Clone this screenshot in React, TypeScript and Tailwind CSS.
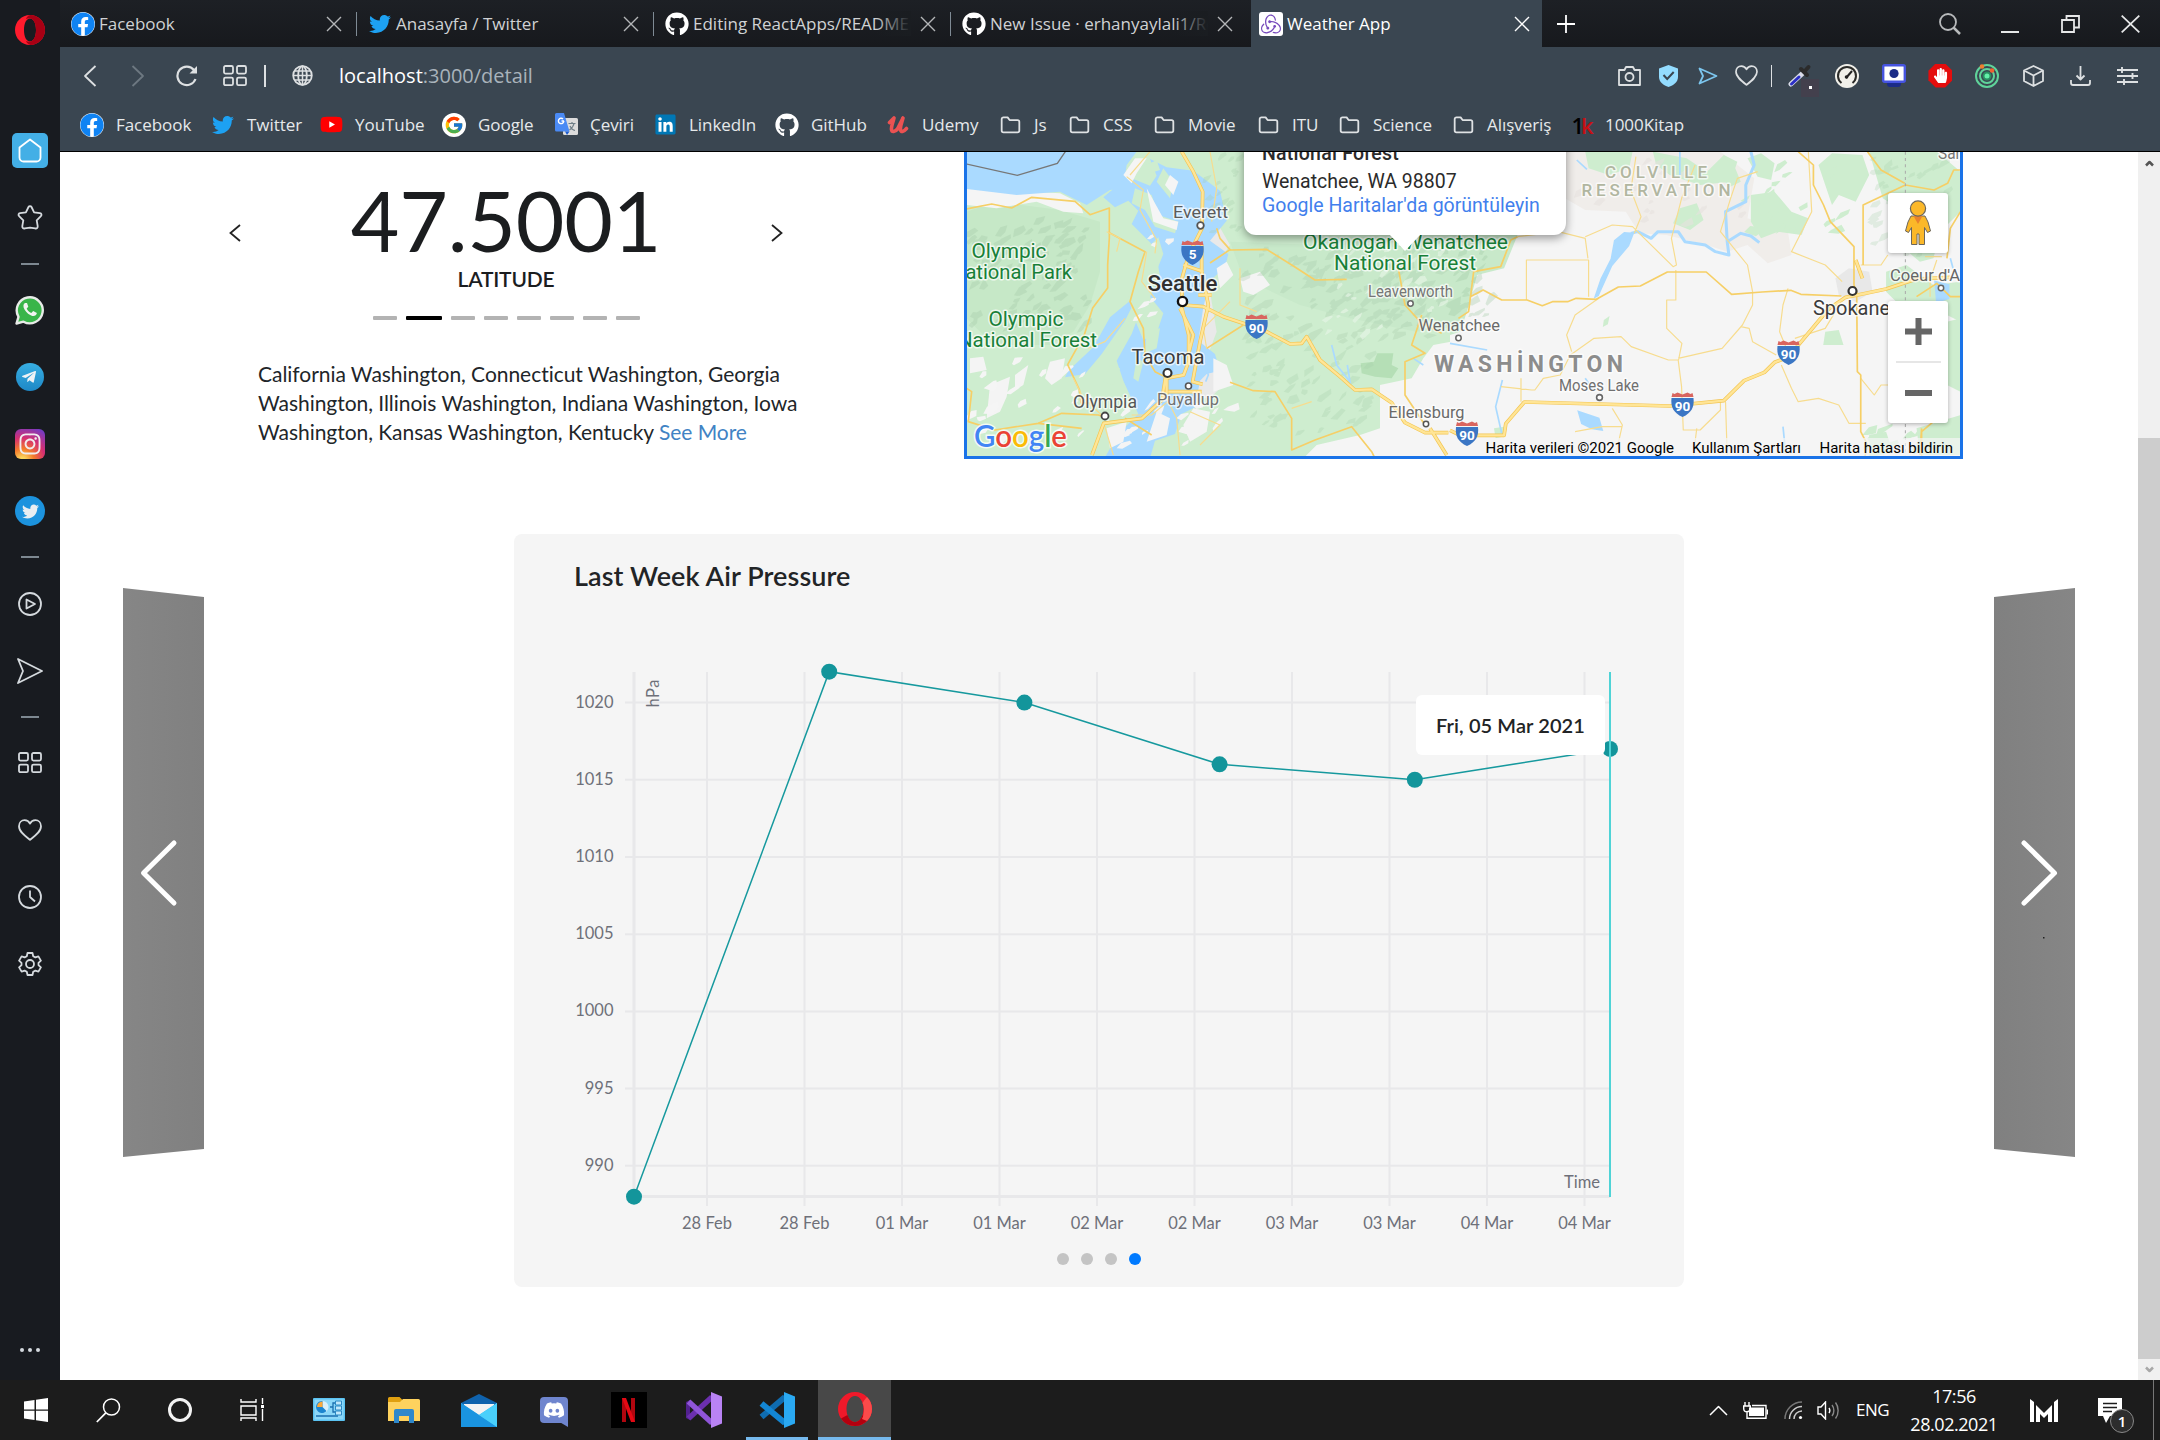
import React from "react";
import { FaTwitter, FaGithub, FaYoutube, FaLinkedin, FaInstagram, FaDiscord, FaFacebook, FaTelegramPlane, FaHandPaper } from "react-icons/fa";
import { FcGoogle } from "react-icons/fc";
import { SiRedux } from "react-icons/si";

type SvgProps = { w: number; h: number; box: string; children: React.ReactNode; className?: string };
const Ico = ({ w, h, box, children, className }: SvgProps) => (
  <svg width={w} height={h} viewBox={box} fill="none" stroke="currentColor" strokeWidth={1.8} strokeLinejoin="round" className={className}>
    {children}
  </svg>
);

/* ---------- shared icons ---------- */
const FacebookBadge = () => (
  <span className="flex size-6 items-center justify-center rounded-full bg-white">
    <FaFacebook className="size-6 text-[#0f83f3]" />
  </span>
);
const Github = () => <FaGithub className="size-6 text-white" />;
const Bird = () => <FaTwitter className="size-[22px] text-[#1da1f2]" />;
const X = ({ bright = false }: { bright?: boolean }) => (
  <Ico w={16} h={16} box="0 0 16 16" className={bright ? "text-white" : "text-[#b4b6b8]"}>
    <path d="M1 1 15 15M15 1 1 15" strokeWidth={1.4} />
  </Ico>
);
const Folder = () => (
  <Ico w={21} h={18} box="0 0 22 20" className="text-[#dfe2e4]">
    <path d="M1.2 3.5a2 2 0 0 1 2-2h4.6l2.2 3h8.8a2 2 0 0 1 2 2v9.7a2 2 0 0 1-2 2H3.2a2 2 0 0 1-2-2z" strokeWidth={2} />
  </Ico>
);
const GridIcon = () => (
  <Ico w={24} h={22} box="0 0 24 22">
    <rect x="1" y="1" width="9" height="7.6" rx="1.5" />
    <rect x="14" y="1" width="9" height="7.6" rx="1.5" />
    <rect x="1" y="12.6" width="9" height="7.6" rx="1.5" />
    <rect x="14" y="12.6" width="9" height="7.6" rx="1.5" />
  </Ico>
);
const HeartIcon = () => (
  <Ico w={24} h={22} box="0 0 24 22">
    <path d="M12 20.8C7 17 1 12.500 1 7.200 1 3.500 3.600 1.200 6.600 1.200c2.300 0 4.300 1.300 5.400 3.400 1.100-2.100 3.100-3.400 5.400-3.400 3 0 5.600 2.300 5.600 6 0 5.300-6 9.800-11 13.600z" />
  </Ico>
);

/* ---------- sidebar ---------- */
const Slot = ({ children }: { children: React.ReactNode }) => <div className="flex h-[67px] w-full shrink-0 items-center justify-center">{children}</div>;
const Dash = () => (
  <div className="flex h-[25.5px] w-full shrink-0 items-center justify-center">
    <div className="h-0.5 w-[18px] bg-[#7d8891]" />
  </div>
);

const Sidebar = () => (
  <aside className="flex h-full w-[60px] shrink-0 flex-col items-center bg-[#181b20] text-[#d5dade]">
    <div className="flex h-[117px] shrink-0 pt-[15px]">
      <svg width="30" height="30" viewBox="0 0 30 30">
        <path fillRule="evenodd" fill="#ff1b2d" d="M15 0C6.700 0 0 6.700 0 15s6.700 15 15 15 15-6.700 15-15S23.300 0 15 0zm0 3.500c3.800 0 6 5 6 11.500s-2.200 11.500-6 11.500S9 21.500 9 15s2.200-11.500 6-11.500z" />
        <path fill="#a70014" d="M15.500 0C23.500.2 30 6.800 30 15s-6.500 14.800-14.500 15C12 29 11 26 11 26c7 3 10-4 10-11S18 1 11 4c0 0 1-3.500 4.500-4z" />
      </svg>
    </div>
    <Slot>
      <div className="flex h-[35px] w-9 items-center justify-center rounded-[5px] bg-[#43afe6] text-white">
        <Ico w={24} h={25} box="0 0 24 25">
          <path d="M1.500 9.500 12 1.500l10.500 8v10a4 4 0 0 1-4 4h-13a4 4 0 0 1-4-4z" />
        </Ico>
      </div>
    </Slot>
    <Slot>
      <Ico w={26} h={26} box="0 0 26 26">
        <path d="M11.500 2c.6-1.200 2.400-1.200 3 0l2.600 5.300 5.900.9c1.500.2 2 1.900.9 2.900l-4.200 4.200 1 5.900c.2 1.500-1 2.700-2.500 2.200L13 22.600l-5.200.8c-1.500.5-2.700-.7-2.500-2.200l1-5.900-4.200-4.200c-1.100-1-.6-2.700.9-2.900l5.900-.9z" />
      </Ico>
    </Slot>
    <Dash />
    <Slot>
      <svg width="30" height="30" viewBox="0 0 30 30">
        <path d="M1.500 28.500l2-6.700A13 13 0 1 1 8.500 26.700z" fill="#39b54a" stroke="#e8ebe8" strokeWidth="2.400" strokeLinejoin="round" />
        <path d="M10 8c-2 1-2 4-.5 6.500 2 3.500 5 5.600 7.800 6.400 2.200.6 4.200-.6 4.600-2.900l-3.700-2-1.900 2c-2-.8-3.800-2.600-4.600-4.500l1.600-1.700L12 8z" fill="#f2f4f2" />
      </svg>
    </Slot>
    <Slot>
      <div className="flex size-7 items-center justify-center rounded-full bg-gradient-to-b from-[#37aee2] to-[#1e88c6]">
        <FaTelegramPlane className="mr-0.5 size-4 text-[#eef2f5]" />
      </div>
    </Slot>
    <Slot>
      <div className="flex size-[30px] items-center justify-center rounded-[6px] bg-[radial-gradient(circle_at_25%_105%,#fbd45c_8%,#f47b2b_30%,#d62f70_58%,#7a3ac0_90%,#4f5bd5_110%)]">
        <FaInstagram className="size-6 text-[#f1ecee]" />
      </div>
    </Slot>
    <Slot>
      <div className="flex size-[30px] items-center justify-center rounded-full bg-[#1c93de]">
        <FaTwitter className="size-[17px] text-[#e8eef2]" />
      </div>
    </Slot>
    <Dash />
    <Slot>
      <Ico w={24} h={24} box="0 0 24 24">
        <circle cx="12" cy="12" r="11" />
        <path d="M8.500 7.500v9L17 12z" />
      </Ico>
    </Slot>
    <Slot>
      <Ico w={28} h={26} box="0 0 28 26">
        <path d="M2 1l24 12L2 25l5-12z" />
      </Ico>
    </Slot>
    <Dash />
    <Slot><GridIcon /></Slot>
    <Slot><HeartIcon /></Slot>
    <Slot>
      <Ico w={24} h={24} box="0 0 24 24">
        <circle cx="12" cy="12" r="11" />
        <path d="M12 5.500V12l5 4.500" />
      </Ico>
    </Slot>
    <Slot>
      <Ico w={24} h={24} box="0 0 24 24">
        <path d="M9.500 1h5l.7 3.200 2.200 1.200 3-1 2.500 4.200-2.400 2.200v2.400l2.400 2.200-2.500 4.200-3-1-2.200 1.200-.7 3.200h-5l-.7-3.200-2.200-1.200-3 1-2.500-4.200 2.400-2.200v-2.400L1.100 8.600l2.500-4.200 3 1 2.200-1.200z" />
        <circle cx="12" cy="12" r="4" />
      </Ico>
    </Slot>
    <div className="mt-auto flex h-[60px] items-center gap-1">
      <i className="size-1 rounded-full bg-[#d5dade]" />
      <i className="size-1 rounded-full bg-[#d5dade]" />
      <i className="size-1 rounded-full bg-[#d5dade]" />
    </div>
  </aside>
);

/* ---------- tabs ---------- */
const Tab = ({ icon, title, fade = false }: { icon: React.ReactNode; title: string; fade?: boolean }) => (
  <div className="flex h-full w-[297px] shrink-0 items-center pr-[15px] pl-[11px]">
    <span className="flex w-6 shrink-0 justify-center">{icon}</span>
    <span className="relative ml-[3px] w-[219px] overflow-hidden pl-px text-[17px] whitespace-nowrap text-[#d0d2d4]">
      {title}
      {fade && <span className="absolute inset-y-0 right-0 w-9 bg-gradient-to-r from-transparent to-[#1a1d21]" />}
    </span>
    <span className="ml-auto"><X /></span>
  </div>
);
const TabSep = () => <div className="-ml-px h-6 w-px shrink-0 self-center bg-[#7f8b95]" />;

const TabBar = () => (
  <div className="flex h-[47px] shrink-0 items-center bg-gradient-to-b from-[#1d2025] to-[#17191d]">
    <Tab icon={<FacebookBadge />} title="Facebook" />
    <TabSep />
    <Tab icon={<Bird />} title="Anasayfa / Twitter" />
    <TabSep />
    <Tab icon={<Github />} title="Editing ReactApps/README" fade />
    <TabSep />
    <Tab icon={<Github />} title="New Issue · erhanyaylali1/Re" fade />
    <div className="ml-[3px] flex h-full w-[291px] shrink-0 items-center bg-[#3a4651] pr-[12px] pl-2">
      <span className="flex size-6 items-center justify-center rounded-[3px] bg-white"><SiRedux className="size-[20px] text-[#764abc]" /></span>
      <span className="ml-1 text-[17px] text-white">Weather App</span>
      <span className="ml-auto"><X bright /></span>
    </div>
    <Ico w={18} h={18} box="0 0 18 18" className="ml-[15px] text-white">
      <path d="M9 0v18M0 9h18" />
    </Ico>
    <div className="ml-auto flex h-full items-center text-[#e6e7e8]">
      <div className="flex w-[60px] justify-center">
        <Ico w={22} h={22} box="0 0 22 22" className="text-[#b8babc]"><circle cx="9" cy="9" r="8" /><path d="m14.500 14.500 6.500 6.500" strokeWidth={2.500} /></Ico>
      </div>
      <div className="flex w-[60px] justify-center"><div className="mt-4 h-0.5 w-[18px] bg-[#e6e7e8]" /></div>
      <div className="flex w-[60px] justify-center">
        <Ico w={19} h={18} box="0 0 19 18"><path d="M1 5h12v12H1zM5.500 5V1H18v11.500h-5" strokeLinejoin="miter" /></Ico>
      </div>
      <div className="flex w-[60px] justify-center">
        <Ico w={19} h={18} box="0 0 19 18"><path d="M.7.7 18.300 17.300M18.300.7.700 17.300" /></Ico>
      </div>
    </div>
  </div>
);

/* ---------- address bar ---------- */
const A = ({ children }: { children: React.ReactNode }) => <div className="flex w-[39px] justify-center">{children}</div>;
const E = ({ children }: { children: React.ReactNode }) => <div className="flex w-[46.7px] justify-center">{children}</div>;

const AddressBar = () => (
  <div className="flex h-[57px] shrink-0 items-center text-[#dde0e2]">
    <Ico w={14} h={22} box="0 0 14 22" className="ml-[23px]"><path d="M12.500 1 2 11l10.500 10" /></Ico>
    <Ico w={14} h={22} box="0 0 14 22" className="ml-[34px] text-[#6d7881]"><path d="M1.500 1 12 11 1.500 21" /></Ico>
    <Ico w={22} h={22} box="0 0 22 22" className="ml-[31px]">
      <path d="M19.500 14A9.300 9.300 0 1 1 18 5" strokeWidth={2.200} />
      <path d="M21 1v7.500h-7.500z" fill="currentColor" stroke="none" />
    </Ico>
    <div className="ml-[25px]"><GridIcon /></div>
    <div className="ml-[17px] h-[22px] w-0.5 bg-[#dde0e2]" />
    <Ico w={21} h={21} box="0 0 21 21" className="ml-[26px]">
      <circle cx="10.500" cy="10.500" r="9.300" /><ellipse cx="10.500" cy="10.500" rx="4.300" ry="9.300" /><path d="M10.500 1v19M1 10.500h19M2.500 6h16M2.500 15h16" strokeWidth={1.500} />
    </Ico>
    <div className="ml-[26px] text-[20px] text-[#a9b3bb]"><span className="text-white">localhost</span>:3000/detail</div>
    <div className="ml-auto flex items-center pr-[9.500px]">
      <A><Ico w={23} h={20} box="0 0 23 20"><path d="M1 4h5.500L8 1h7l1.500 3H22v15H1z" /><circle cx="11.500" cy="11" r="4" /></Ico></A>
      <A><svg width="19" height="22" viewBox="0 0 19 22"><path d="M9.500 0 19 3.500V12c0 5-4.500 8.500-9.500 10C4.500 20.500 0 17 0 12V3.500z" fill="#93dcff" /><path d="m4.500 10 3.700 4 6.500-7" fill="none" stroke="#3a4651" strokeWidth="2" /></svg></A>
      <A><Ico w={20} h={18} box="0 0 20 18" className="text-[#7cc6ee]"><path d="m1.500 1.500 17 7.500-17 7.500L5 9z" /></Ico></A>
      <A><Ico w={23} h={21} box="0 0 24 22"><path d="M12 20.800C7 17 1 12.500 1 7.200 1 3.500 3.600 1.200 6.600 1.200c2.300 0 4.300 1.300 5.400 3.400 1.100-2.100 3.100-3.400 5.400-3.400 3 0 5.600 2.300 5.600 6 0 5.300-6 9.800-11 13.600z" /></Ico></A>
      <div className="flex w-[11px] justify-center"><div className="h-[22px] w-[1.500px] bg-[#dde0e2]" /></div>
      <E>
        <div className="relative">
          <svg width="24" height="24" viewBox="0 0 24 24">
            <path d="M15 9 3 20" stroke="#d9dce8" strokeWidth="5" strokeLinecap="round" /><path d="M11 13 3.500 20" stroke="#2a2ec4" strokeWidth="3" strokeLinecap="round" />
            <path d="m13 5 6 6M16 8l4.500-5" stroke="#2b2b2b" strokeWidth="4" strokeLinecap="round" />
          </svg>
          <span className="absolute top-[15px] left-[13px] flex h-[18px] w-[18px] items-center justify-center bg-[#43404d]"><i className="size-[3px] bg-white" /></span>
        </div>
      </E>
      <E><svg width="24" height="24" viewBox="0 0 24 24"><circle cx="12" cy="12" r="12" fill="#f1f0ea" /><path d="M6.500 19A9 9 0 1 1 17.500 19" fill="none" stroke="#2b2b28" strokeWidth="2" /><path d="m11 14 6-7" stroke="#222" strokeWidth="2" /><circle cx="11.500" cy="13" r="1.800" fill="#222" /></svg></E>
      <E><svg width="24" height="24" viewBox="0 0 24 24"><path d="M5 19h14v1a3 3 0 0 1-3 3H8a3 3 0 0 1-3-3z" fill="#1b2b87" /><rect x="1.200" y="1.200" width="21.600" height="16.500" rx="1.500" fill="#fff" stroke="#4654e0" strokeWidth="2.400" /><circle cx="12" cy="9.500" r="4.600" fill="#1b2b87" /></svg></E>
      <E><span className="flex size-6 items-center justify-center bg-[#e40d0d] [clip-path:polygon(30%_0,70%_0,100%_30%,100%_70%,70%_100%,30%_100%,0_70%,0_30%)]"><FaHandPaper className="size-[15px] text-white" /></span></E>
      <E><svg width="24" height="24" viewBox="0 0 24 24" fill="none" stroke="#5fd39a" strokeWidth="2"><circle cx="12" cy="12" r="11" /><circle cx="12" cy="12" r="7" /><circle cx="12" cy="12" r="3.500" fill="#62f0a8" stroke="#2b8e62" /><circle cx="7" cy="2.500" r="2.300" fill="#f08030" stroke="none" /><circle cx="17" cy="6.500" r="2.300" fill="#f06030" stroke="none" /></svg></E>
      <E><Ico w={21} h={22} box="0 0 21 22"><path d="M10.500 1 20 5.500v10.500L10.500 21 1 16V5.500zM1 5.500l9.500 5 9.500-5M10.500 10.500V21" /></Ico></E>
      <E><Ico w={21} h={20} box="0 0 21 20"><path d="M10.500 0v13M6.500 9.500l4 4 4-4M1 14v3a2 2 0 0 0 2 2h15a2 2 0 0 0 2-2v-3" /></Ico></E>
      <E><Ico w={21} h={18} box="0 0 21 18"><path d="M0 3h21M0 9h21M0 15h21M5 0v6M15.500 6v6M7 12v6" strokeWidth={1.900} /></Ico></E>
    </div>
  </div>
);

/* ---------- bookmarks ---------- */
const BM = ({ w, icon, text }: { w: string; icon: React.ReactNode; text: string }) => (
  <div className={`flex shrink-0 items-center whitespace-nowrap ${w}`}>
    <span className="flex w-6 shrink-0 justify-center">{icon}</span>
    <span className="ml-3">{text}</span>
  </div>
);
const Translate = () => (
  <svg width="23" height="23" viewBox="0 0 23 23"><rect x="8" y="5" width="15" height="17" rx="1.500" fill="#dcdcdc" /><path d="M1.500 0H9l5.500 18.500H1.500A1.500 1.500 0 0 1 0 17V1.500A1.500 1.500 0 0 1 1.500 0z" fill="#4a8af4" /><path d="m10 18.500 4.500 0-2.500 3.500z" fill="#1a5bd0" /><path d="M9 8H6.500m2.300 0A2.700 2.700 0 1 1 8 6" stroke="#fff" strokeWidth="1.400" fill="none" /><path d="M13.500 10.500h7M17 9v1.500m2 0c-.5 3-2.500 5-4.500 6.500m.5-4c1 2 3 4 5 4.500" stroke="#6f7f88" strokeWidth="1.200" fill="none" /></svg>
);
const UdemyMark = () => (
  <svg width="22" height="18" viewBox="0 0 22 18" fill="none" stroke="#eb5252" strokeWidth="3.600" strokeLinecap="round" strokeLinejoin="round"><path d="M2.500 6.500 7 2C6 7 4 10 4.500 13.500c.4 3 3.500 2.500 6-.5L16 2c-1 4-3 8-2.500 11.500.3 3 3 2.500 6-1" /></svg>
);

const Bookmarks = () => (
  <div className="flex h-[47px] shrink-0 items-center pt-1.5 pb-3 pl-[20px] text-[17px] tracking-[-0.05px] text-[#e6e9eb]">
    <BM w="w-[131px]" icon={<FacebookBadge />} text="Facebook" />
    <BM w="w-[108px]" icon={<Bird />} text="Twitter" />
    <BM w="w-[123px]" icon={<span className="flex h-3 w-4 items-center justify-center bg-white"><FaYoutube className="size-[23px] shrink-0 text-[#ff0000]" /></span>} text="YouTube" />
    <BM w="w-[112px]" icon={<span className="flex size-6 items-center justify-center rounded-full bg-white"><FcGoogle className="size-5" /></span>} text="Google" />
    <BM w="w-[99px]" icon={<Translate />} text="Çeviri" />
    <BM w="w-[122px]" icon={<span className="flex size-[18px] items-center justify-center bg-white"><FaLinkedin className="size-[23px] shrink-0 text-[#0077b5]" /></span>} text="LinkedIn" />
    <BM w="w-[111px]" icon={<Github />} text="GitHub" />
    <BM w="w-[112px]" icon={<UdemyMark />} text="Udemy" />
    <BM w="w-[69px]" icon={<Folder />} text="Js" />
    <BM w="w-[85px]" icon={<Folder />} text="CSS" />
    <BM w="w-[104px]" icon={<Folder />} text="Movie" />
    <BM w="w-[81px]" icon={<Folder />} text="ITU" />
    <BM w="w-[114px]" icon={<Folder />} text="Science" />
    <BM w="w-[118px]" icon={<Folder />} text="Alışveriş" />
    <BM w="w-[130px]" icon={<span className="font-['Open_Sans',sans-serif] text-[22px] leading-6 font-semibold tracking-[-3px] text-black">1<span className="text-[#c80f14]">k</span></span>} text="1000Kitap" />
  </div>
);

/* ---------- map ---------- */
/* Deterministic facets give wooded hills their relief. */
function facets(seed: number, x: number, y: number, w: number, h: number, n: number, s: number) {
  let v = seed;
  const r = () => ((v = (v * 16807) % 2147483647) / 2147483647);
  r();
  r();
  let d = "";
  for (let i = 0; i < n; i++) {
    const cx = x + r() * w;
    const cy = y + r() * h;
    const slant = r() * 0.5 + 0.2;
    const k = s * (0.35 + r() * 0.45);
    const pts: string[] = [];
    for (let a = 0; a < 5; a++) {
      const t = (a / 5) * Math.PI * 2 + r();
      const m = k * (0.5 + r() * 0.5);
      const dx = Math.cos(t) * m;
      pts.push(`${(cx + dx).toFixed(0)} ${(cy + Math.sin(t) * m * 0.6 - dx * slant).toFixed(0)}`);
    }
    d += `M${pts.join("L")}z`;
  }
  return d;
}

type Lbl = { x: number; y: number; s: number; len: number; c: string; t: string; b?: number; sp?: boolean };
const LABELS: Lbl[] = [
  { x: 1173, y: 217.5, s: 17, len: 55, c: "#5b5b5b", t: "Everett" },
  { x: 971.5, y: 257.5, s: 20, len: 75, c: "#188038", t: "Olympic" },
  { x: 951, y: 279, s: 20, len: 121, c: "#188038", t: "National Park" },
  { x: 988.5, y: 326, s: 20, len: 75, c: "#188038", t: "Olympic" },
  { x: 958, y: 347, s: 20, len: 139, c: "#188038", t: "National Forest" },
  { x: 1147.5, y: 291, s: 22, len: 70, c: "#303030", t: "Seattle", b: 500 },
  { x: 1131.5, y: 364, s: 21, len: 73, c: "#3c3c3c", t: "Tacoma" },
  { x: 1157, y: 405, s: 17, len: 62, c: "#707070", t: "Puyallup" },
  { x: 1073, y: 408, s: 18, len: 64, c: "#555", t: "Olympia" },
  { x: 1303, y: 249, s: 20, len: 205, c: "#188038", t: "Okanogan-Wenatchee" },
  { x: 1334, y: 270, s: 20, len: 142, c: "#188038", t: "National Forest" },
  { x: 1368, y: 297, s: 16, len: 85, c: "#757575", t: "Leavenworth" },
  { x: 1418.5, y: 331, s: 17, len: 81.5, c: "#6a6a6a", t: "Wenatchee" },
  { x: 1388.5, y: 418, s: 17, len: 76, c: "#6a6a6a", t: "Ellensburg" },
  { x: 1434, y: 372, s: 23, len: 189, c: "#8c8c8c", t: "WASHİNGTON", b: 700, sp: true },
  { x: 1559, y: 391, s: 16.5, len: 80, c: "#707070", t: "Moses Lake" },
  { x: 1605, y: 178, s: 17, len: 102, c: "#b1b6a0", t: "COLVILLE", b: 500, sp: true },
  { x: 1581.5, y: 196, s: 17, len: 149, c: "#b1b6a0", t: "RESERVATION", b: 500, sp: true },
  { x: 1813, y: 315, s: 21, len: 77, c: "#3c3c3c", t: "Spokane" },
  { x: 1890, y: 281, s: 17, len: 70, c: "#666", t: "Coeur d'A" },
  { x: 1938, y: 158.5, s: 17, len: 26, c: "#777", t: "San" },
];
const TOWNS = [
  [1200.5, 225.5, 3.3, 1.8, "#555"], [1182.5, 301.5, 4.6, 2.4, "#111"], [1167.5, 373, 4, 2.1, "#333"], [1188.5, 386, 3, 1.6, "#555"],
  [1105, 416, 3.5, 1.8, "#444"], [1410.5, 303.5, 2.7, 1.5, "#666"], [1458.5, 338, 2.7, 1.5, "#666"], [1426, 424, 2.7, 1.5, "#555"],
  [1599.5, 397.5, 2.9, 1.6, "#666"], [1852.5, 291, 4, 2.2, "#333"], [1941, 288, 2.7, 1.5, "#666"],
] as const;
const SHIELDS = [[1192.5, 253, "5"], [1256.5, 327, "90"], [1467, 434, "90"], [1788.5, 353, "90"], [1682.5, 405, "90"]] as const;

const WEST_HIGHWAYS =
  "M695 20l35 60 28 60-2 110-40 80-20 70 0 90 20 80 0 80-15 40-55 10-10 65-60 55-115 15-35 95M700 480l60 5 60 30 120 40 80 42 35-2 15-20 40 70 60 50 45 40 50-2 60 40 40 60 60 30 70 0M1440 850l50 80M755 300l0 80 20 100-25 110-22 120 30 8M655 740h100M650 690v60M690 490l40 80-15 60M745 450h40M700 360l60 20";
const EAST_HIGHWAYS =
  "M0 856l30 15h130l5-35 55-65 430 12 160-16 60-60 60-25 30-30 40-15 120-145 50-35 50-10 70-15 90-30 100-5M1200 345l20 55";

const WestMap = () => (
  <g transform="translate(950 145) scale(.33333)">
    <rect width="1502" height="960" fill="#ceedcf" />
    <path d="M50 200 140 170 330 195 450 230V380L420 480 370 560 300 600 130 600 50 520z" fill="#c6e8c7" />
    <path d="M840 290 1100 300 1500 280V540L1400 560 1200 520 1050 480 880 400z" fill="#c8e9ca" />
    <path d="M1502 590 1450 600 1420 640 1385 700 1290 720 1290 850 1230 870 1100 900 1040 960h462z" fill="#f5f5f5" />
    <path d="M1232 655l40-5 10-25h48l-5 35 20 10-20 30-50-5-40-10z" fill="#b5dfb6" />
    <path d="M50 130l280 15 60 30 10 30-60-5-80-30-120 20-90-10z" fill="#f5f5f5" />
    <path d="M690 270 740 255 800 230 840 300 800 360 780 440 800 560 770 640 840 700 780 760 640 760 590 720 640 670 700 640 690 500 680 380z" fill="#e9e9e9" />
    <path d="M50 20H560L530 60 525 95 590 125 480 135 410 180 330 140 200 150 50 132z" fill="#aadaff" />
    <path d="M560 22l40 20 20 50-20 30-50-20-30 5-60 50 35 30 40-20 30 30-20 40 60 60 20-20 15 50-40 100-60 40-60 50-50 90-75 70-10 20 60-10 50-60 70-100 30-60 20 20-30 80-45 80 20 60 45 100-60 60-40 70 40 30 90-10 20-70 60-20 20-60 40-20 15-80 20-20 40-10-15-50-50-40 15-100 20-80 45-40 10-40-55-40 50-60-20-90-80-60-80-10z" fill="#aadaff" />
    <path d="M555 130l50 20 20 60 60 20-10 35-60-20-30-50-40-20zM640 70l30 40-10 50-40-50zM590 60l30-15 10 30-30 10zM575 325l45 10 10 60-30 60 40 50-20 60-40 20-25-60-20-70 20-70zM590 560l40-10-10 60-35 15zM480 660l30 10-20 50-30-10zM560 640l20 10-15 60-15-10z" fill="#ceedcf" />
    <path d="M520 90l35-50 35 0-30 45-15 30zM590 130l50 90 45 10-5 25-70-25z" fill="#f5f5f5" />
    <path d="M660 90l25 20-15 40-25-30z" fill="#f5f5f5" />
    <path d="M120 720l60-25-10 60-20 45-40 20zM195 690l40-30-15 60-25 15zM300 650l45-10-10 60-30 20-20-20zM60 640l40-5 10 40-50 10zM470 850l60-20-10 60-40 20zM620 800l40 20-10 50-60 20zM730 790l50 10-10 60-50 30-20-50zM790 640l40 20 20 60-60 20zM870 400l60-20 30 40-50 30-30-10zM830 350l-30 20 10 60 40-40z" fill="#f4f4f4" />
    <path d={facets(77, 60, 640, 380, 260, 20, 38)} fill="#f5f5f5" />
    <path d={facets(31, 440, 760, 440, 160, 18, 40)} fill="#f4f4f4" />
    <path d={facets(4411, 560, 260, 100, 260, 8, 30)} fill="#f4f4f4" />
    <path d={facets(501, 60, 225, 360, 330, 90, 38)} fill="#a5cba8" opacity=".36" />
    <path d={facets(88, 880, 290, 610, 300, 130, 42)} fill="#a5cba8" opacity=".3" />
    <path d={facets(1234, 900, 560, 360, 310, 60, 38)} fill="#a5cba8" opacity=".28" />
    <path d={facets(654, 770, 30, 110, 240, 20, 32)} fill="#a5cba8" opacity=".28" />
    <path d={facets(2222, 1090, 290, 400, 280, 40, 30)} fill="#e4f3e4" opacity=".7" />
    <path d="M1145 600l15 60 40 50-8-50M760 650l15 40-8 20M1390 640l30 20" stroke="#aadaff" strokeWidth="5" fill="none" />
    <path d="M50 57 202 91 322 55 346 20" stroke="#777" strokeWidth="4" fill="none" />
    <g fill="none" stroke="#f6cf66" strokeWidth="5" strokeLinejoin="round">
      <path d="M50 192l75-15 60 12 60-32 130 12 45 40 58-20 0 90-5 80 0 70-45 60-25 80-50 90 35 75 5 40 30 0" />
      <path d="M475 262l110 58-20 60-25 90 40 80 5 80 30 50 30 15M50 730l15 10-10 90 80 25 130-20 70-30 110 5 25 8" />
      <path d="M840 315l110-2 80 50 65 42 95-2M1345 370l20 110 50 55 60 30M1415 510l-30 90 40 25-60 25 0 100 60 90M840 712l70 25 65 3 50 80 0 95 70-30 110-40 60 75 15 30" />
      <path d="M770 610l110-70M525 820l80 50M800 250l10 30 30 34-60 40M265 835l130 15" />
    </g>
    <g fill="none" stroke="#f7dc8e" strokeWidth="3.500" strokeLinejoin="round">
      <path d="M530 95l50 40-10 60 50 90-5 40M590 320l-15 90 40 50M525 520l-60 70-50 20M780 20l20 110-15 100M600 20l-60 70M870 370l0 110 50 20M460 830l30 100M650 760l30 60 10 110M720 800l90 40-60 60M840 470l-80 80 10 60M1025 790l60-20M545 810l60 0 60-50M370 700l30 60 55 50M470 260l40 20-10 40" />
    </g>
    <g fill="none" strokeLinejoin="round">
      <path d={WEST_HIGHWAYS} stroke="#f3c552" strokeWidth="11" />
      <path d={WEST_HIGHWAYS} stroke="#ffe596" strokeWidth="7" />
    </g>
  </g>
);

const EastMap = () => (
  <g transform="translate(1450 145) scale(.33806 .33333)">
    <rect width="1520" height="960" fill="#f5f5f5" />
    <path d="M0 270H200L160 370 80 390 50 500 30 560 0 570z" fill="#c8e9ca" />
    <path d={facets(19, 10, 290, 110, 220, 30, 38)} fill="#9fc6a2" opacity=".32" />
    <path d="M340 20H800L900 100 880 220 1000 260 1010 330 940 355 880 300 820 320 760 300 640 270 560 265 520 200 400 195 340 160z" fill="#f0edea" />
    <path d="M400 20h140l-10 50-60 20-60-20zM600 20l100 20 60 40 50-50 40 20-20 60-90 10-90-30-40-30zM680 190l50-15 20 50-40 30-50-20zM890 150l70-10 50 60 50 20-20 50-70-10-50 20-30-50zM880 40l40-15 40 30-10 50-40-10zM1090 60l40-35 90 5 20 60-40 80-50-20-20 30zM1240 20h200l70 60v120l-60 60-20 80-40 10-60-50 30-90-80-50zM1290 380l60-20 80 60 80-10v120l-40-20-80 30-100-100zM1470 530l40-10v220l-40-20zM1110 560l40-5 14 45h-60zM455 525l17-12-5 25-15 8zM1380 850l130-40v120h-120zM1240 870l50-10 20 60-70 20zM840 60l20 50-40 20-10-40zM130 850l30-5-5 30-20 5z" fill="#ceedcf" />
    <path d={facets(57, 1240, 40, 240, 290, 36, 36)} fill="#a9cfab" opacity=".28" />
    <path d={facets(571, 870, 40, 320, 240, 18, 40)} fill="#ceedcf" />
    <path d={facets(92, 350, 40, 540, 210, 24, 34)} fill="#e6e1de" opacity=".6" />
    <path d={facets(733, 1240, 840, 260, 80, 16, 40)} fill="#ceedcf" />
    <path d="M1140 400l40-30 60 10 10 60-50 30-50-20z" fill="#e8e8e8" />
    <path d="M890 20l10 40-25 60 0 50-60 30 5 90 5 40-40-10-30-20-60-10-20-30-60 0-20 20-40-20-20 5M820 290l40-25 30 8 25 20" fill="none" stroke="#aadaff" strokeWidth="9" strokeLinejoin="round" />
    <path d="M545 263l-15 40-50 60-40 90-15 8 20-60 30-60 10-55 30-25z" fill="#aadaff" />
    <path d="M380 800l60 20 10 35-30-5-30-15zM375 45l30 28M680 20v70M0 595l110 20M400 700l20 30M1435 410l40 10 0 40-35 10zM985 845l8 80M1480 340l8 30" fill="#aadaff" stroke="#aadaff" strokeWidth="5" />
    <path d="M155 705l-20 80 18 80" fill="none" stroke="#aadaff" strokeWidth="5" />
    <g fill="none" stroke="#f7dc8e" strokeWidth="3.500" strokeLinejoin="round">
      <path d="M226 465V345H410V455M200 275l120-15 80 20 8 60M400 275l80-35 60 5 20 20 100 100 10-5-15-80 30-120 40-100M545 265l20-50 -30-80 15-100M668 375v90h-27v85l45 45-10 50-30 0-110-40-30-30-80 5-70 50-30 60-50 10-25 35-10 0-90-10M440 460l-70 50-25 60 15 50M675 640l130-30 60-70 30-60 0-40-15-80-80-100 30-100 20-60 60-20M675 645l10 80 5 130h50l60-60 0-30M815 770l5 160M480 790l30 50-20 90M730 850l-10 80M980 660l30 70 20 40 60-10 60 20 30 55h50M1000 430l-15 50-10 80 20 50M1060 20l10 180-60 120 100 40 50 50M1140 500l-30 50-90 30M1215 360h60l20-30M1215 700l40 50 20-30 30 0M1405 335h50M1440 345l-20 60 0 50M370 860l80-15 60 0M860 545l25 5 10 40 70 40M210 700v70" />
    </g>
    <g fill="none" stroke="#f6cf66" strokeWidth="5" strokeLinejoin="round">
      <path d="M60 455l38-20 55 30 75 0 45 17 30-12 45 0 25-10 60 3 65-37 65-3 80-42 115 0 75 67 90-7 85-5 30 12 120 5M200 275l-20 10-30 80-80 15-15 120-30 20M1030 20l45 40 0 60 30 60 20 50 70 75 0 115 8 20 2 240 10 10 0 170 20 40-20 90M1222 360V180l125-60 85 15 40-20 18-40 20 0M1345 115l-70-40-40-55M1510 200l-30 50-10 90M1395 850l-5 80M1380 455l60-40 40 40h30M1395 940l0-80 70-60" />
    </g>
    <g fill="none" strokeLinejoin="round">
      <path d={EAST_HIGHWAYS} stroke="#f3c552" strokeWidth="11" />
      <path d={EAST_HIGHWAYS} stroke="#ffe596" strokeWidth="7" />
    </g>
    <path d="M1347 20V940" stroke="#aaa" strokeWidth="3" strokeDasharray="9 10" />
  </g>
);

const MapCard = () => (
  <div className="relative h-[307px] w-[999px] shrink-0 overflow-hidden border-x-[3px] border-b-[3px] border-[#1a73e8] font-[Roboto,sans-serif]">
    <svg width="993" height="304" viewBox="967 152 993 304" fontFamily="Roboto, sans-serif" className="block">
      <WestMap />
      <EastMap />
      <rect x="1480" y="438" width="480" height="18" fill="#f5f5f5" opacity=".7" />
      {TOWNS.map(([x, y, r, w, c], i) => <circle key={i} cx={x} cy={y} r={r} fill="#fff" stroke={c} strokeWidth={w} />)}
      {LABELS.map((l, i) => (
        <text key={i} x={l.x} y={l.y} fontSize={l.s} fill={l.c} fontWeight={l.b ?? 400} textLength={l.len} lengthAdjust={l.sp ? "spacing" : "spacingAndGlyphs"} stroke="#fff" strokeOpacity=".7" strokeWidth="3" strokeLinejoin="round" paintOrder="stroke">{l.t}</text>
      ))}
      {SHIELDS.map(([x, y, t], i) => (
        <g key={i} transform={`translate(${x} ${y})`}>
          <path d="M-10-12 -8-11 -5-12.500 0-10.500 5-12.500 8-11 10-12 11-8H-11z" fill="#d9655f" />
          <path d="M-11-7H11C12 2 9 8 0 12-9 8-12 2-11-7z" fill="#3b76c4" />
          <text y="6" fontSize="13.500" fontWeight="700" fill="#fff" textAnchor="middle">{t}</text>
        </g>
      ))}
      <text x="974" y="446.500" fontSize="30" fontFamily="Lato, sans-serif" fontWeight="600" textLength="93" lengthAdjust="spacingAndGlyphs" stroke="#fff" strokeWidth="3" paintOrder="stroke" strokeOpacity=".8">
        <tspan fill="#4285f4">G</tspan><tspan fill="#ea4335">o</tspan><tspan fill="#fbbc05">o</tspan><tspan fill="#4285f4">g</tspan><tspan fill="#34a853">l</tspan><tspan fill="#ea4335">e</tspan>
      </text>
      <g fontSize="15" fill="#000">
        <text x="1485.500" y="453" textLength="188.500">Harita verileri ©2021 Google</text>
        <text x="1692" y="453" textLength="109">Kullanım Şartları</text>
        <text x="1819.500" y="453" textLength="133.500">Harita hatası bildirin</text>
      </g>
    </svg>
    <div className="absolute -top-10 left-[277px] h-[123px] w-[322px] rounded-[12px] bg-white px-[18px] pt-[30px] text-[19.500px] leading-6 text-[#2b2b2b] shadow-[0_3px_10px_rgba(0,0,0,0.4)]">
      <div className="font-medium tracking-[0.25px] whitespace-nowrap">National Forest</div>
      <div className="mt-[4px] whitespace-nowrap">Wenatchee, WA 98807</div>
      <div className="whitespace-nowrap text-[#427fed]">Google Haritalar'da görüntüleyin</div>
      <div className="absolute top-[122px] left-[145px] h-[17px] w-8 bg-white [clip-path:polygon(0_0,100%_0,50%_100%)]" />
    </div>
    <div className="absolute top-[41px] left-[921px] flex h-[60px] w-[60px] items-center justify-center rounded-[3px] bg-white shadow-[0_1px_4px_rgba(0,0,0,0.3)]">
      <svg width="26" height="46" viewBox="0 0 26 46">
        <path d="M6 16h14l3 6 2.500 9-3 1.500-3-5V44.500h-5.500V34h-2v10.500H6.500V27.500l-3 5-3-1.500L3 22z" fill="#fbb829" stroke="#6b665c" strokeWidth="1" />
        <path d="M8.500 16h9L13 24z" fill="#e8822d" />
        <circle cx="13" cy="8.500" r="7.600" fill="#fbb829" stroke="#6b665c" strokeWidth="1.200" />
      </svg>
    </div>
    <div className="absolute top-[149px] left-[921px] flex h-[122px] w-[60px] flex-col items-center rounded-[3px] bg-white shadow-[0_1px_4px_rgba(0,0,0,0.3)]">
      <div className="flex h-[60px] items-center"><svg width="27" height="27" viewBox="0 0 27 27"><path d="M10.500 0h6v10.500H27v6H16.500V27h-6V16.500H0v-6h10.500z" fill="#666" /></svg></div>
      <div className="h-0.5 w-[45px] bg-[#e6e6e6]" />
      <div className="flex h-[60px] items-center"><div className="h-1.5 w-[27px] bg-[#666]" /></div>
    </div>
  </div>
);

/* ---------- summary ---------- */
const Summary = () => (
  <div className="flex h-[307px] w-[904px] shrink-0 flex-col font-[Lato,sans-serif] text-[#212529]">
    <div className="ml-[169px] flex h-[162px] w-[554px] items-center justify-between">
      <Ico w={12} h={18} box="0 0 12 18" className="text-[#222]"><path d="M11 1 1.500 9 11 17" strokeLinejoin="miter" /></Ico>
      <div className="flex h-full flex-col items-center pt-[26px] text-[#1b1d1f]">
        <div className="h-[84px] text-[84px] leading-[84px] tracking-[-0.25px]">47.5001</div>
        <div className="mt-[5px] text-[21px] leading-6 font-semibold tracking-[-0.2px]">LATITUDE</div>
      </div>
      <Ico w={12} h={18} box="0 0 12 18" className="text-[#222]"><path d="M1 1l9.500 8L1 17" strokeLinejoin="miter" /></Ico>
    </div>
    <div className="mt-0.5 ml-[313px] flex gap-[9px]">
      <i className="h-1 w-6 rounded-[1px] bg-[#b3b3b3]" />
      <i className="h-1 w-9 rounded-[1px] bg-black" />
      {[0, 1, 2, 3, 4, 5].map((k) => <i key={k} className="h-1 w-6 rounded-[1px] bg-[#b3b3b3]" />)}
    </div>
    <p className="mt-[39px] ml-[198px] text-[21px] leading-[29px] tracking-[-0.04px] whitespace-nowrap">
      California Washington, Connecticut Washington, Georgia<br />
      Washington, Illinois Washington, Indiana Washington, Iowa<br />
      Washington, Kansas Washington, Kentucky <span className="text-[#4183c4]">See More</span>
    </p>
  </div>
);

/* ---------- chart ---------- */
const VALUES = [988, 1022, 1020, 1016, 1015, 1017];
const px = (i: number) => 634 + i * 195.2;
const py = (v: number) => 671.7 + (1022 - v) * 15.44;
const DAYS = ["28 Feb", "28 Feb", "01 Mar", "01 Mar", "02 Mar", "02 Mar", "03 Mar", "03 Mar", "04 Mar", "04 Mar"];

const ChartCard = () => (
  <section className="h-[753px] w-[1170px] shrink-0 rounded-[8px] bg-[#f5f5f5] font-[Lato,sans-serif]">
    <h2 className="h-[59px] pt-[26px] pl-[60px] text-[27px] leading-8 font-semibold tracking-[0.08px] text-[#222426]">Last Week Air Pressure</h2>
    <div className="relative">
      <svg width="1170" height="647" viewBox="514 593 1170 647" fontFamily="Lato, sans-serif" className="block">
        <g stroke="#e8e8ea" strokeWidth="2">
          {[1020, 1015, 1010, 1005, 1000, 995, 990].map((v) => <path key={v} d={`M625 ${py(v)}H1610`} />)}
          {DAYS.map((_, i) => <path key={i} d={`M${707 + i * 97.5} 672V1206`} />)}
          <path d="M634 672V1197M634 1196.500H1610" strokeWidth="3" />
        </g>
        <g fontSize="16.500" fill="#6e7079">
          {[1020, 1015, 1010, 1005, 1000, 995, 990].map((v) => <text key={v} x="613.500" y={py(v) + 5} textAnchor="end">{v}</text>)}
          {DAYS.map((d, i) => <text key={i} x={707 + i * 97.5} y="1229" textAnchor="middle">{d}</text>)}
          <text transform="translate(658.500 707.500) rotate(-90)" textLength="28">hPa</text>
          <text x="1564" y="1187.500" textLength="36">Time</text>
        </g>
        <polyline points={VALUES.map((v, i) => `${px(i)},${py(v)}`).join(" ")} fill="none" stroke="#16999e" strokeWidth="1.500" />
        {VALUES.map((v, i) => <circle key={i} cx={px(i)} cy={py(v)} r="8" fill="#13959b" />)}
        <path d="M1610 672V1197" stroke="#4fd3d6" strokeWidth="2" />
      </svg>
      <div className="absolute top-[102px] left-[902px] flex h-[60px] w-[189px] items-center justify-center rounded-[6px] bg-white text-[20px] font-semibold tracking-[0.1px] whitespace-nowrap text-[#222426]">Fri, 05 Mar 2021</div>
    </div>
    <div className="mt-[13px] flex justify-center gap-3">
      <i className="size-3 rounded-full bg-[#c4c4c4]" />
      <i className="size-3 rounded-full bg-[#c4c4c4]" />
      <i className="size-3 rounded-full bg-[#c4c4c4]" />
      <i className="size-3 rounded-full bg-[#007aff]" />
    </div>
  </section>
);

const PanelLeft = () => (
  <svg width="81" height="569" viewBox="0 0 81 569" className="mt-[54px] shrink-0">
    <defs><linearGradient id="panelLeft"><stop stopColor="#868686" /><stop offset="1" stopColor="#808080" /></linearGradient></defs>
    <path d="M0 0 81 9V561L0 569z" fill="url(#panelLeft)" />
    <path d="M51 255 20.500 285 51 315" fill="none" stroke="#fff" strokeWidth="5" strokeLinecap="round" strokeLinejoin="round" />
  </svg>
);
const PanelRight = () => (
  <svg width="81" height="569" viewBox="0 0 81 569" className="mt-[54px] shrink-0">
    <defs><linearGradient id="panelRight"><stop stopColor="#808080" /><stop offset="1" stopColor="#868686" /></linearGradient></defs>
    <path d="M0 9 81 0V569L0 561z" fill="url(#panelRight)" />
    <path d="M30 255 60.500 285 30 315" fill="none" stroke="#fff" strokeWidth="5" strokeLinecap="round" strokeLinejoin="round" />
    <rect x="49" y="349" width="1.500" height="1.500" fill="#222" />
  </svg>
);

const Scrollbar = () => (
  <div className="flex w-[22px] shrink-0 flex-col items-center bg-[#f0f0f0]">
    <div className="flex h-[286px] pt-[8px]"><Ico w={9} h={7} box="0 0 9 7" className="text-[#555]"><path d="m1 5.500 3.500-3.500L8 5.500" strokeWidth={2.500} /></Ico></div>
    <div className="h-[921px] w-full bg-[#cdcdcd]" />
    <div className="flex h-[21px] items-center"><Ico w={9} h={7} box="0 0 9 7" className="text-[#a8a8a8]"><path d="m1 1.500 3.500 3.500L8 1.500" strokeWidth={2.500} /></Ico></div>
  </div>
);

/* ---------- taskbar ---------- */
const T = ({ children, w = "w-[75px]" }: { children: React.ReactNode; w?: string }) => <div className={`flex h-full shrink-0 items-center justify-center ${w}`}>{children}</div>;

const Taskbar = () => (
  <footer className="flex h-[60px] shrink-0 bg-[#1c1c1c] text-white">
    <T w="w-[72px]"><svg width="24" height="24" viewBox="0 0 24 24" fill="#fff"><path d="M0 3.500 10.500 2v9.500H0zM12 1.800 24 0v11.500H12zM0 12.700h10.500V22L0 20.500zM12 12.700h12V24l-12-1.800z" /></svg></T>
    <T w="w-[72px]"><Ico w={25} h={25} box="0 0 25 25"><circle cx="15.500" cy="9" r="8" strokeWidth={1.500} /><path d="M9.800 14.800 .8 24" strokeWidth={1.700} /></Ico></T>
    <T w="w-[72px]"><div className="size-6 rounded-full border-[3px] border-[#f2f2f2]" /></T>
    <T w="w-[72px]"><Ico w={24} h={24} box="0 0 24 24"><path d="M1 1v3h15V1M1 8h15v9H1zM1 23v-3h15v3M22.500 0v6M22.500 11v12" strokeWidth={1.400} strokeLinejoin="miter" /><rect x="21" y="7" width="3" height="3" fill="#fff" stroke="none" /></Ico></T>
    <T w="w-[82px]"><svg width="32" height="24" viewBox="0 0 32 24"><rect width="32" height="23" rx="1" fill="#5bc3f2" /><rect x="1.500" y="1.500" width="29" height="20" fill="#8cd7f8" /><circle cx="9.500" cy="9" r="6" fill="#d8effa" /><path d="M9.500 9V3a6 6 0 1 0 4 10z" fill="#1d85cf" /><path d="M9.500 9V3.500A5.500 5.500 0 0 0 4 9z" fill="#fba93a" /><path d="M17 9h3V5h2M20 9v5h2M3 18h22" stroke="#1b6fae" fill="none" strokeWidth="1.300" /><path d="M22.500 3h6v4h-6zM22.500 8h6v4h-6zM22.500 13h6v4h-6z" fill="#bfe7fb" stroke="#2b88c4" /></svg></T>
    <T w="w-[68px]"><svg width="32" height="26" viewBox="0 0 32 26"><path d="M0 1.500A1.500 1.500 0 0 1 1.500 0h10L15 3.500V8H0z" fill="#e0a010" /><path d="M0 5h12l3-3h15.500A1.500 1.500 0 0 1 32 3.500V24H0z" fill="#fed25e" /><path d="M6 14a2 2 0 0 1 2-2h16a2 2 0 0 1 2 2v12h-5v-7H11v7H6z" fill="#2f88cb" /></svg></T>
    <T w="w-[82px]"><svg width="36" height="33" viewBox="0 0 36 33"><path d="M0 9 18 0l18 9v4H0z" fill="#0f62ac" /><path d="M3 10h30v12H3z" fill="#f3f3f3" /><path d="M0 9l18 12L36 9v24H0z" fill="#31b8f2" /><path d="M0 9 36 33H0z" fill="#1a94e0" /><path d="m18 21 18-12v24z" fill="#49d0fb" /></svg></T>
    <T w="w-[68px]"><div className="relative flex h-[26px] w-[28px] items-center justify-center rounded-[4px] bg-[#6f85ce]"><FaDiscord className="size-[22px] text-white" /><i className="absolute right-0 -bottom-1 h-2 w-2 bg-[#6f85ce] [clip-path:polygon(0_40%,100%_0,100%_100%)]" /></div></T>
    <T w="w-[81px]"><div className="flex size-9 items-center justify-center bg-black"><svg width="13" height="24" viewBox="0 0 13 24"><path d="M0 0h4v24H0zM9 0h4v24H9z" fill="#b1060f" /><path d="M0 0h4l9 24H9z" fill="#e50914" /></svg></div></T>
    <T w="w-[69px]">
      <svg width="36" height="36" viewBox="0 0 36 36" fill="none">
        <path d="M0 10 4 8v20l-4-2z" fill="#52218f" />
        <path d="M2.500 26.500 26 5" stroke="#6b2fae" strokeWidth="5.500" />
        <path d="M2.500 9.500 26 31" stroke="#8f55d8" strokeWidth="5.500" />
        <path d="M25 0l11 4.500v27L25 36z" fill="#b983f4" />
      </svg>
    </T>
    <div className="flex w-[80px] flex-col items-center justify-between pt-3 pr-0.5">
      <svg width="36" height="36" viewBox="0 0 36 36" fill="none">
        <path d="M2.500 25 26 5" stroke="#0f6cb0" strokeWidth="6" />
        <path d="M2.500 11.500 26 31" stroke="#1386d3" strokeWidth="6" />
        <path d="m25 0 11 4.500v27L25 36z" fill="#2aa9f2" />
      </svg>
      <div className="h-[3px] w-[62px] bg-[#76b9ed]" />
    </div>
    <div className="flex w-[73px] flex-col items-center justify-between bg-[#484848] pt-3">
      <svg width="34" height="34" viewBox="0 0 34 34"><path fillRule="evenodd" d="M17 0a17 17 0 1 0 0 34 17 17 0 0 0 0-34zm0 4c5 0 8.500 6 8.500 13s-3.500 13-8.500 13-8.500-6-8.500-13S12 4 17 4z" fill="#f0192a" /><path d="M17 34a17 17 0 0 1-14-7.500L9.500 23C11 27.500 13.800 30 17 30s6-2.500 7.500-7l5 5.500C26 32 22 34 17 34z" fill="#b3000f" /><path d="M24.500 11C28 6 28 6 29 5c3 3 5 7 5 12s-2 9-5 12l-5-2c1.500-3 2-6 2-10 0-2-.5-4-1.500-6z" fill="#fb4a4a" /></svg>
      <div className="h-[3px] w-full bg-[#76b9ed]" />
    </div>
    <div className="ml-auto flex items-center text-[18px]">
      <Ico w={19} h={11} box="0 0 19 11"><path d="m1 10 8.500-8.500L18 10" strokeWidth={1.500} /></Ico>
      <svg width="25" height="17" viewBox="0 0 25 17" className="ml-[15px]" fill="none" stroke="#fff" strokeWidth="1.400"><path d="M2 0v4M6 0v4M.7 4h6.600v2.500a3 3 0 0 1-6.600 0zM4 10v6.300h19V3.500H9" /><rect x="6" y="5.500" width="15" height="8.500" fill="#fff" stroke="none" /><path d="M24.300 7.500v5" /></svg>
      <svg width="19" height="19" viewBox="0 0 19 19" className="ml-4" fill="none" strokeWidth="1.500"><path d="M1 18A17 17 0 0 1 18 1" stroke="#777" /><path d="M5.500 18A12.500 12.500 0 0 1 18 5.500M10 18a8 8 0 0 1 8-8" stroke="#ccc" /><circle cx="16.500" cy="16.500" r="1.600" fill="#fff" /></svg>
      <svg width="22" height="19" viewBox="0 0 22 19" className="ml-3.5" fill="none" stroke="#fff" strokeWidth="1.400"><path d="M1 6h3l4.500-5v17L4 13H1zM12 7c1 1.500 1 3.500 0 5" /><path d="M15 4c2.500 3 2.500 8 0 11M18.500 1.500c3.500 4.500 3.500 11.500 0 16" stroke="#888" /></svg>
      <span className="ml-[17px] w-[34px] text-[17px] tracking-[-0.5px]">ENG</span>
      <div className="ml-[17px] w-[94px] pb-px text-center text-[18px] leading-[28px] tracking-[-0.45px]">17:56<br />28.02.2021</div>
      <svg width="28" height="23" viewBox="0 0 28 23" className="ml-[29px]" fill="#fff"><path d="M0 0l4 3v20H0zM28 0l-4 3v20h4zM6 6l8 8 8-8v17h-4v-8l-4 4-4-4v8H6z" /></svg>
      <div className="relative mr-[31px] ml-10 h-6 w-6">
        <svg width="24" height="26" viewBox="0 0 24 26"><path d="M0 0h24v18H12l-4 7-3-7H0z" fill="#fff" /><path d="M5 5.500h14M5 9.500h14M5 13.500h9" stroke="#1c1c1c" strokeWidth="1.300" /></svg>
        <span className="absolute top-[11px] left-3 flex size-6 items-center justify-center rounded-full border border-[#888] bg-[#2d2d2d] text-[15px] font-semibold">1</span>
      </div>
      <div className="mr-1.5 h-[60px] w-px bg-[#777]" />
    </div>
  </footer>
);

export default function App() {
  return (
    <div className="flex h-[1440px] w-[2160px] flex-col overflow-hidden bg-white font-['Open_Sans',sans-serif]">
      <div className="flex h-[1380px] shrink-0">
        <Sidebar />
        <div className="flex w-[2100px] flex-col">
          <TabBar />
          <div className="flex h-[105px] shrink-0 flex-col border-b border-black bg-[#3a4651]">
            <AddressBar />
            <Bookmarks />
          </div>
          <div className="flex h-[1228px]">
            <main className="w-[2078px] overflow-hidden bg-white">
              <div className="flex">
                <Summary />
                <MapCard />
              </div>
              <div className="mt-[75px] flex justify-between px-[63px]">
                <PanelLeft />
                <ChartCard />
                <PanelRight />
              </div>
            </main>
            <Scrollbar />
          </div>
        </div>
      </div>
      <Taskbar />
    </div>
  );
}
